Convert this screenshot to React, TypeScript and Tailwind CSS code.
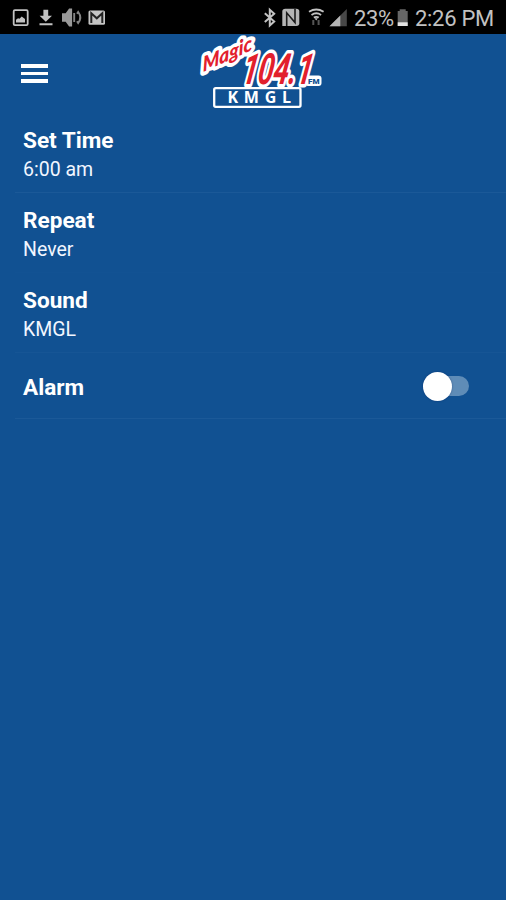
import React from 'react';

function StatusBar() {
  return (
    <div className="flex h-[34px] items-center bg-black pl-3 text-[#c2c2c2]">
      <svg className="h-[34px] w-[96px]" viewBox="12 0 96 34" fill="currentColor">
        <rect x="13.7" y="10.2" width="14" height="15" rx="1.2" fill="none" stroke="currentColor" strokeWidth="1.8" />
        <path d="M16 22.5v-2.8l2-1.4 1.5.5 2.2-2.3 3.3 2.6v3.4z" />
        <path d="M43.4 9.8h4.8v6h3.8l-6.2 6-6.2-6h3.8zM39.5 23.3h13v1.9h-13z" />
        <path d="M62 13.2h3.7l3.4-4.6h3v17.8h-3l-3.4-4.6H62z" fill="#999" />
        <path d="M74.2 13v9M77 13.8l1.2-1.800q4.200 5.500 0 11l-1.200-1.800" fill="none" stroke="#858585" strokeWidth="1.9" />
        <rect x="88.5" y="10.5" width="16.5" height="14.2" rx="1.5" fill="#c4c4c4" />
        <path d="M91.3 23V13.3l5.5 5 5.500-5V23" fill="none" stroke="#222" strokeWidth="2" />
      </svg>
      <svg className="ml-[152px] h-[34px] w-[92px]" viewBox="260 0 92 34" fill="currentColor">
        <path d="M264.8 13.2l9.400 8.300-4.400 4V9.800l4.400 4-9.400 8.300" fill="none" stroke="currentColor" strokeWidth="2" />
        <path d="M282.3 26V11.500q0-2.700 3-2.700h11q3 0 3 2.700V23.300q0 2.700-3 2.700z" fill="#b5b5b5" />
        <path d="M286.7 26V12.800l8.300 9.700V9" fill="none" stroke="#1c1c1c" strokeWidth="1.6" />
        <g fill="none" stroke="currentColor" strokeWidth="1.8">
          <path d="M309 11.800q7.300-4.600 14.600 0M311.500 14.900q4.800-3.300 9.600 0M313.800 17.600q2.500-1.500 5 0" />
        </g>
        <path d="M314.500 18.200h3.400l-1.700 2.300z" />
        <path d="M313.300 25v-5M318.600 20v5" stroke="#555" strokeWidth="2" />
        <path d="M329.500 26.300L346.800 9v17.300z" fill="#484848" />
        <path d="M329.500 26.300L340.300 15.500v10.800z" fill="#b5b5b5" />
      </svg>
      <span className="ml-[2px] w-[43px] pt-[3px] text-[22px] leading-[34px] tracking-[-0.4px] whitespace-nowrap">23%</span>
      <svg className="h-[34px] w-3" viewBox="397 0 12 34">
        <path d="M397.700 11h2V9.200h6V11h2v15h-10z" fill="#666" />
        <path d="M397.700 22.300h10V26h-10z" fill="#e3e3e3" />
      </svg>
      <span className="ml-[6px] pt-[3px] text-[22px] leading-[34px] tracking-[-0.3px] whitespace-nowrap">2:26 PM</span>
    </div>
  );
}

function StationLogo() {
  return (
    <svg className="h-[79px] w-[140px] overflow-visible" viewBox="190 34 140 79" strokeLinejoin="round" strokeLinecap="round">
      <rect x="305" y="75.5" width="16.5" height="10.5" rx="3" fill="#fff" />
      <g fill="#e2202c" stroke="#fff" paintOrder="stroke" fontStyle="italic">
        <text transform="translate(203 72) rotate(-24) skewX(-22)" fontFamily="Lato, sans-serif" fontSize="19" fontWeight="900" strokeWidth="7" textLength="54" lengthAdjust="spacingAndGlyphs">Magic</text>
        <text transform="translate(241 84) skewX(-9)" fontFamily="Roboto, sans-serif" strokeWidth="7" fontSize="43" fontWeight="700" textLength="70" lengthAdjust="spacingAndGlyphs">104.1</text>
      </g>
      <text x="308" y="83.500" fill="#115192" fontFamily="Roboto, sans-serif" fontWeight="900" fontSize="7.5" textLength="11.5" lengthAdjust="spacingAndGlyphs">FM</text>
      <rect x="214.2" y="88.2" width="86.3" height="18.6" rx="1.5" fill="#115192" stroke="#fff" strokeWidth="2.3" />
      <text x="227.500" y="103" fill="#fff" fontFamily="Open Sans, sans-serif" fontWeight="700" fontSize="16" textLength="63.5" lengthAdjust="spacing">KMGL</text>
    </svg>
  );
}

function Header() {
  return (
    <header className="grid h-[79px] grid-cols-[190px_140px_1fr]">
      <button aria-label="Menu" className="flex flex-col gap-1 pt-[30px] pl-[21px]">
        <span className="h-[3.5px] w-[27px] bg-white" />
        <span className="h-[3.5px] w-[27px] bg-white" />
        <span className="h-[3.5px] w-[27px] bg-white" />
      </button>
      <StationLogo />
    </header>
  );
}

function SettingRow({ title, value, line }: { title: string; value: string; line: string }) {
  return (
    <div className={`ml-[15px] h-20 border-b pt-[14px] pl-2 ${line}`}>
      <div className="text-[22.6px] leading-[28px] font-bold">{title}</div>
      <div className="text-[19.5px] leading-[30px] text-[#f2f6ff]">{value}</div>
    </div>
  );
}

export default function App() {
  return (
    <div className="h-[900px] w-[506px] overflow-hidden bg-[#115192] font-['Roboto',sans-serif] text-white">
      <StatusBar />
      <Header />
      <main>
        <SettingRow title="Set Time" value="6:00 am" line="border-[#1b5998]" />
        <SettingRow title="Repeat" value="Never" line="border-[#125293]" />
        <SettingRow title="Sound" value="KMGL" line="border-[#165595]" />
        <div className="ml-[15px] flex h-[66px] items-center justify-between border-b border-[#1b5998] pr-[37px] pl-2">
          <span className="pt-[5px] text-[22.6px] font-bold">Alarm</span>
          <button role="switch" aria-checked="false" aria-label="Alarm" className="mt-[1px] flex h-[30px] w-[46px] items-center">
            <span className="flex h-5 w-[46px] items-center rounded-full bg-[#5f8cb7]">
              <span className="h-[29px] w-[29px] shrink-0 rounded-full bg-white shadow-[0_0_2px_rgba(0,30,90,0.5)]" />
            </span>
          </button>
        </div>
      </main>
    </div>
  );
}
